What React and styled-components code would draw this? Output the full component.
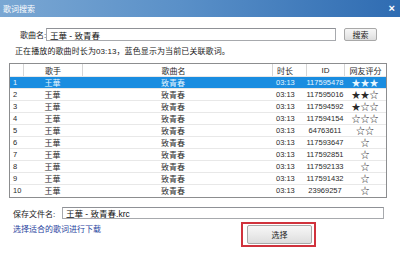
import React from "react"
import styled, { createGlobalStyle } from "styled-components"

const GlobalStyle = createGlobalStyle`
  html, body {
    margin: 0;
    padding: 0;
    background: #ffffff;
  }
  body {
    font-family: "Liberation Sans", "Noto Sans CJK SC", sans-serif;
    font-size: 8px;
    color: #222;
  }
`

const Window = styled.div`
  width: 400px;
  height: 255px;
  overflow: hidden;
  background: #ffffff;
  display: flex;
  flex-direction: column;
`

const TitleBar = styled.div`
  height: 17px;
  flex: none;
  display: flex;
  align-items: center;
  justify-content: space-between;
  padding: 0 5px 0 3px;
  background: linear-gradient(to right, #7aa7d3 0%, #5a90c8 45%, #2f6cb2 100%);
  color: #ffffff;
  font-size: 8px;
`

const Close = styled.span`
  font-size: 11px;
  font-weight: bold;
  line-height: 1;
`

const SearchRow = styled.div`
  margin-top: 11px;
  padding-left: 20px;
  display: grid;
  grid-template-columns: 26px 290px 41px;
  align-items: center;
`

const Label = styled.span`
  white-space: nowrap;
  color: #222;
`

const TextBox = styled.div`
  height: ${p => p.$h || 13}px;
  box-sizing: border-box;
  border: 1px solid #a7a9ad;
  border-top-color: #8f9196;
  padding-left: 3px;
  display: flex;
  align-items: center;
  font-size: 8.5px;
  color: #111;
  background: #ffffff;
`

const Button = styled.div`
  height: ${p => p.$h || 13}px;
  width: ${p => p.$w ? `${p.$w}px` : "auto"};
  margin-left: ${p => p.$ml || 0}px;
  box-sizing: border-box;
  border: 1px solid #a8a8a8;
  border-radius: 2px;
  background: linear-gradient(to bottom, #f6f6f6 0%, #ebebeb 50%, #dddddd 100%);
  display: flex;
  align-items: center;
  justify-content: center;
  color: #222;
  font-size: 8px;
`

const Info = styled.div`
  margin-top: 6px;
  padding-left: 15px;
  height: 10px;
  line-height: 10px;
  white-space: nowrap;
  letter-spacing: 0.1px;
`

const Table = styled.div`
  margin: 6px 0 0 9px;
  width: 378px;
  box-sizing: border-box;
  border: 1px solid #8c8d8f;
  background: #ffffff;
`

const Row = styled.div`
  display: grid;
  grid-template-columns: 13px 59px 190px 34px 38px 42px;
  height: ${p => (p.$header ? 13 : 12)}px;
  box-sizing: border-box;
  border-bottom: 1px solid ${p => (p.$last ? "transparent" : "#e8e8e8")};
  background: ${p => (p.$selected ? "#1a8de0" : "#ffffff")};
  color: ${p => (p.$selected ? "#e6f6ff" : "#2a2a2a")};
  align-items: center;
  font-size: 8px;
`

const Cell = styled.div`
  height: 100%;
  display: flex;
  align-items: center;
  justify-content: ${p => p.$align || "center"};
  padding: ${p => p.$pad || "0"};
  white-space: nowrap;
  overflow: hidden;
  box-sizing: border-box;
  border-left: ${p => (p.$sep ? "1px solid #d6d6d6" : "none")};
  font-size: ${p => p.$fs || 8}px;
`

const SaveRow = styled.div`
  margin-top: 9px;
  padding-left: 13px;
  display: grid;
  grid-template-columns: 49px 322px;
  align-items: center;
`

const Footer = styled.div`
  margin-top: 3px;
  padding-left: 13px;
  display: grid;
  grid-template-columns: 228px 75px;
  align-items: start;
`

const Link = styled.span`
  margin-top: 3px;
  color: #1f3f9e;
  white-space: nowrap;
  line-height: 10px;
`

const Highlight = styled.div`
  width: 75px;
  height: 25px;
  box-sizing: border-box;
  border: 2px solid #d0323c;
  padding: 1px 2px 1px 4px;
  display: flex;
`

const songs = [
  { id: "117595478", stars: "★★★" },
  { id: "117595016", stars: "★★☆" },
  { id: "117594592", stars: "★☆☆" },
  { id: "117594154", stars: "☆☆☆" },
  { id: "64763611", stars: "☆☆" },
  { id: "117593647", stars: "☆" },
  { id: "117592851", stars: "☆" },
  { id: "117592133", stars: "☆" },
  { id: "117591432", stars: "☆" },
  { id: "23969257", stars: "☆" },
]

const App = () => (
  <Window>
    <GlobalStyle />
    <TitleBar>
      <span>歌词搜索</span>
      <Close>×</Close>
    </TitleBar>

    <SearchRow>
      <Label>歌曲名:</Label>
      <TextBox>王華 - 致青春</TextBox>
      <Button $ml={8}>搜索</Button>
    </SearchRow>

    <Info>正在播放的歌曲时长为03:13，蓝色显示为当前已关联歌词。</Info>

    <Table>
      <Row $header>
        <Cell />
        <Cell $sep>歌手</Cell>
        <Cell $sep $pad="0 8px 0 0">歌曲名</Cell>
        <Cell $sep $align="flex-start" $pad="0 0 0 4px">时长</Cell>
        <Cell $sep>ID</Cell>
        <Cell $sep>网友评分</Cell>
      </Row>
      {songs.map((s, i) => (
        <Row key={s.id} $selected={i === 0} $last={i === songs.length - 1}>
          <Cell $align="flex-start" $pad="0 0 0 3px" $fs={7.5}>{i + 1}</Cell>
          <Cell>王華</Cell>
          <Cell $pad="0 8px 0 0">致青春</Cell>
          <Cell $align="flex-start" $pad="0 0 0 4px" $fs={7.5}>03:13</Cell>
          <Cell $fs={7.5}>{s.id}</Cell>
          <Cell $fs={9}>{s.stars}</Cell>
        </Row>
      ))}
    </Table>

    <SaveRow>
      <Label>保存文件名:</Label>
      <TextBox $h={12}>王華 - 致青春.krc</TextBox>
    </SaveRow>

    <Footer>
      <Link>选择适合的歌词进行下载</Link>
      <Highlight>
        <Button $w={65} $h={19}>选择</Button>
      </Highlight>
    </Footer>
  </Window>
)

export default App
